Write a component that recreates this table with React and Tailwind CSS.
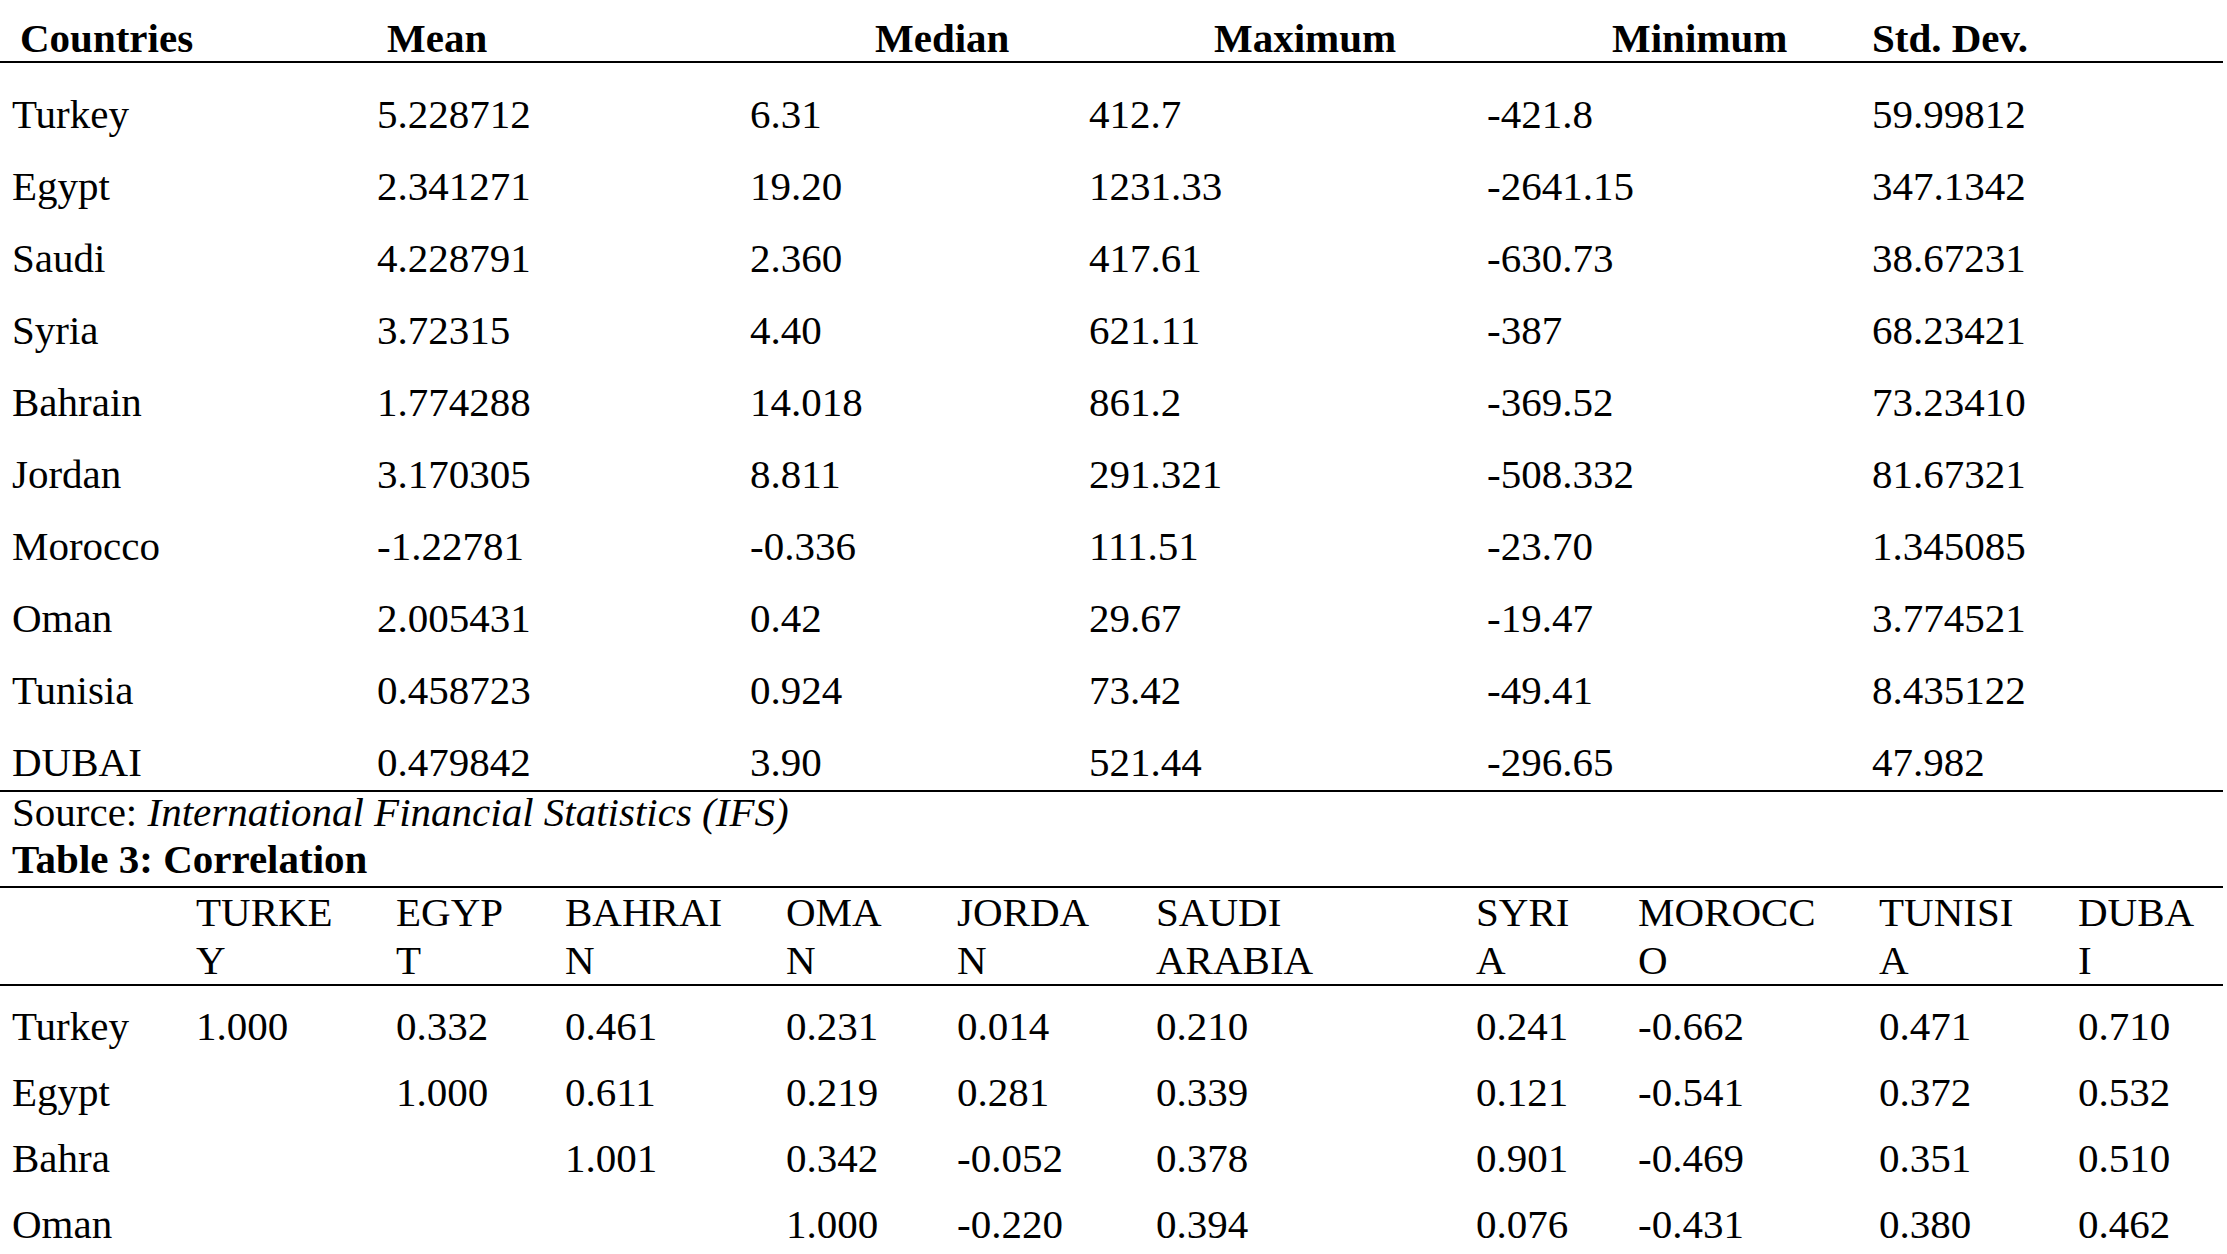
const stats = [
  ["Turkey", "5.228712", "6.31", "412.7", "-421.8", "59.99812"],
  ["Egypt", "2.341271", "19.20", "1231.33", "-2641.15", "347.1342"],
  ["Saudi", "4.228791", "2.360", "417.61", "-630.73", "38.67231"],
  ["Syria", "3.72315", "4.40", "621.11", "-387", "68.23421"],
  ["Bahrain", "1.774288", "14.018", "861.2", "-369.52", "73.23410"],
  ["Jordan", "3.170305", "8.811", "291.321", "-508.332", "81.67321"],
  ["Morocco", "-1.22781", "-0.336", "111.51", "-23.70", "1.345085"],
  ["Oman", "2.005431", "0.42", "29.67", "-19.47", "3.774521"],
  ["Tunisia", "0.458723", "0.924", "73.42", "-49.41", "8.435122"],
  ["DUBAI", "0.479842", "3.90", "521.44", "-296.65", "47.982"],
];

const corrHead = [
  ["", ""],
  ["TURKE", "Y"],
  ["EGYP", "T"],
  ["BAHRAI", "N"],
  ["OMA", "N"],
  ["JORDA", "N"],
  ["SAUDI", "ARABIA"],
  ["SYRI", "A"],
  ["MOROCC", "O"],
  ["TUNISI", "A"],
  ["DUBA", "I"],
];

const corr = [
  ["Turkey", "1.000", "0.332", "0.461", "0.231", "0.014", "0.210", "0.241", "-0.662", "0.471", "0.710"],
  ["Egypt", "", "1.000", "0.611", "0.219", "0.281", "0.339", "0.121", "-0.541", "0.372", "0.532"],
  ["Bahra", "", "", "1.001", "0.342", "-0.052", "0.378", "0.901", "-0.469", "0.351", "0.510"],
  ["Oman", "", "", "", "1.000", "-0.220", "0.394", "0.076", "-0.431", "0.380", "0.462"],
];

const statCols = "grid grid-cols-[365px_373px_339px_398px_385px_1fr] pl-[12px]";
const corrCols =
  "grid grid-cols-[184px_200px_169px_221px_171px_199px_320px_162px_241px_199px_1fr] pl-[12px]";

export default function App() {
  return (
    <div className="h-[1254px] w-[2227px] overflow-hidden bg-white text-black font-['Liberation_Serif',serif] text-[41px]">
      <div className="w-[2223px]">
        {/* Table 2 header */}
        <div className={`${statCols} h-[63px] pt-[16px] leading-[45px] font-bold border-b-2 border-black whitespace-nowrap`}>
          <div className="pl-[8px]">Countries</div>
          <div className="pl-[10px]">Mean</div>
          <div className="pl-[125px]">Median</div>
          <div className="pl-[125px]">Maximum</div>
          <div className="pl-[125px]">Minimum</div>
          <div>Std. Dev.</div>
        </div>

        {/* Table 2 rows */}
        <div className="pt-[15px] border-b-2 border-black">
          {stats.map((r, i) => (
            <div
              key={r[0]}
              className={`${statCols} ${i === stats.length - 1 ? "h-[64px]" : "h-[72px]"} pt-[14px] leading-[45px] whitespace-nowrap`}
            >
              {r.map((c, j) => (
                <div key={j}>{c}</div>
              ))}
            </div>
          ))}
        </div>

        {/* Source + caption */}
        <div className="pl-[12px] leading-[40px] whitespace-nowrap">
          <div>
            Source: <span className="italic">International Financial Statistics (IFS)</span>
          </div>
          <div className="mt-[7px] font-bold">Table 3: Correlation</div>
        </div>

        {/* Table 3 header */}
        <div className={`${corrCols} mt-[7px] border-t-2 border-b-2 border-black leading-[48px] whitespace-nowrap`}>
          {corrHead.map((h, i) => (
            <div key={i}>
              <div>{h[0] || "\u00a0"}</div>
              <div>{h[1] || "\u00a0"}</div>
            </div>
          ))}
        </div>

        {/* Table 3 rows */}
        <div className="pt-[6px]">
          {corr.map((r) => (
            <div key={r[0]} className={`${corrCols} h-[66px] pt-[12px] leading-[45px] whitespace-nowrap`}>
              {r.map((c, j) => (
                <div key={j}>{c}</div>
              ))}
            </div>
          ))}
        </div>
      </div>
    </div>
  );
}
